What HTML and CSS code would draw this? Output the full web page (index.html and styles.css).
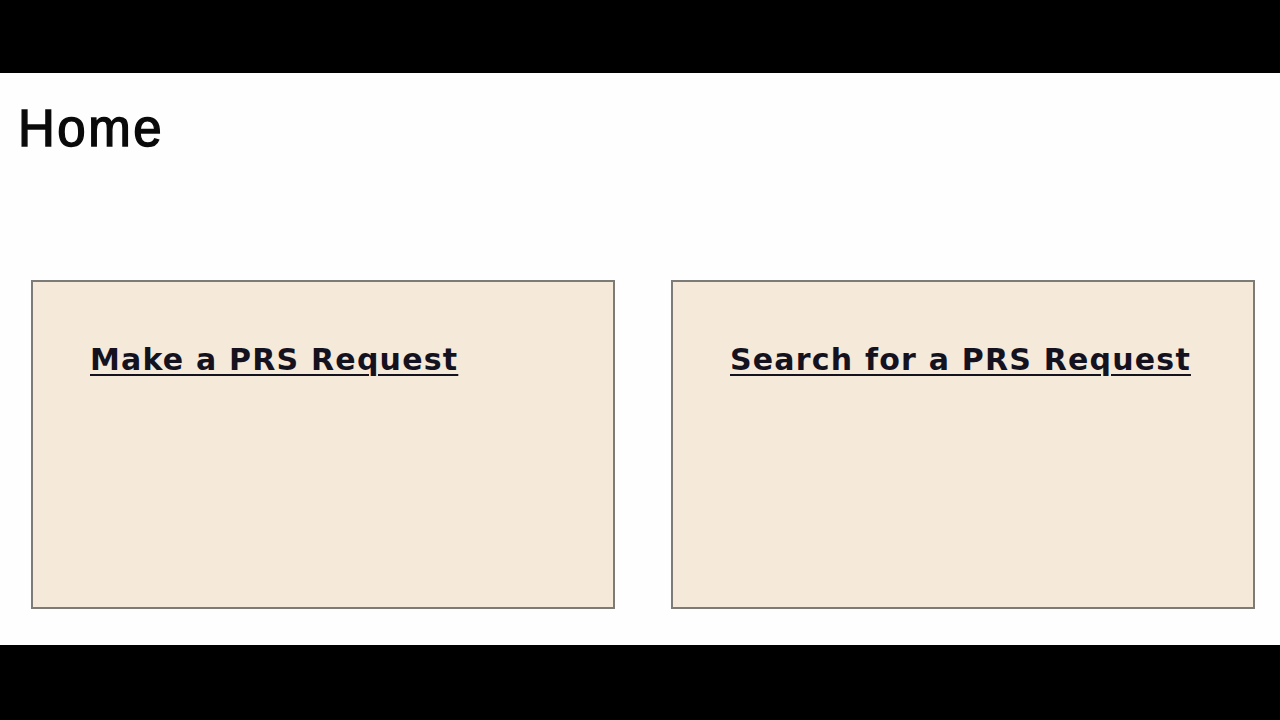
FILE: index.html
```html
<!DOCTYPE html>
<html>
<head>
<meta charset="utf-8">
<link rel="stylesheet" href="styles.css">
</head>
<body>
<div class="bar-top"></div>
<main class="page">
  <h1 class="title">Home</h1>
  <div class="tiles">
    <div class="tile"><a class="tile-link" href="#">Make a PRS Request</a></div>
    <div class="tile"><a class="tile-link" href="#">Search for a PRS Request</a></div>
  </div>
</main>
<div class="bar-bottom"></div>
</body>
</html>
```
FILE: styles.css
```css
html, body {
  margin: 0;
  padding: 0;
  background: #000;
  height: 720px;
  overflow: hidden;
}
body {
  display: flex;
  flex-direction: column;
}
.bar-top { height: 73px; background: #000; }
.bar-bottom { flex: 1; background: #000; }
.page {
  height: 572px;
  background: #fefefe;
  box-sizing: border-box;
  padding: 28px 0 0 0;
}
.title {
  margin: 0 0 0 18px;
  font-family: "Liberation Sans", Arial, sans-serif;
  font-weight: normal;
  font-size: 51px;
  line-height: 56px;
  color: #0a0a0a;
  letter-spacing: 2.5px;
  -webkit-text-stroke: 1.4px #0a0a0a;
}
.tiles {
  display: flex;
  gap: 56px;
  margin: 123px 0 0 31px;
}
.tile {
  width: 580px;
  height: 325px;
  background: #f5e9da;
  border: 2px solid #7d7b78;
  box-sizing: content-box;
  padding: 0;
}
.tile-link {
  display: inline-block;
  margin: 60px 0 0 57px;
  font-family: "DejaVu Sans", Verdana, sans-serif;
  font-weight: bold;
  font-size: 30px;
  line-height: 36px;
  color: #14121e;
  letter-spacing: 1.2px;
  text-decoration: underline;
  text-decoration-thickness: 2px;
  text-underline-offset: 4px;
}
```
